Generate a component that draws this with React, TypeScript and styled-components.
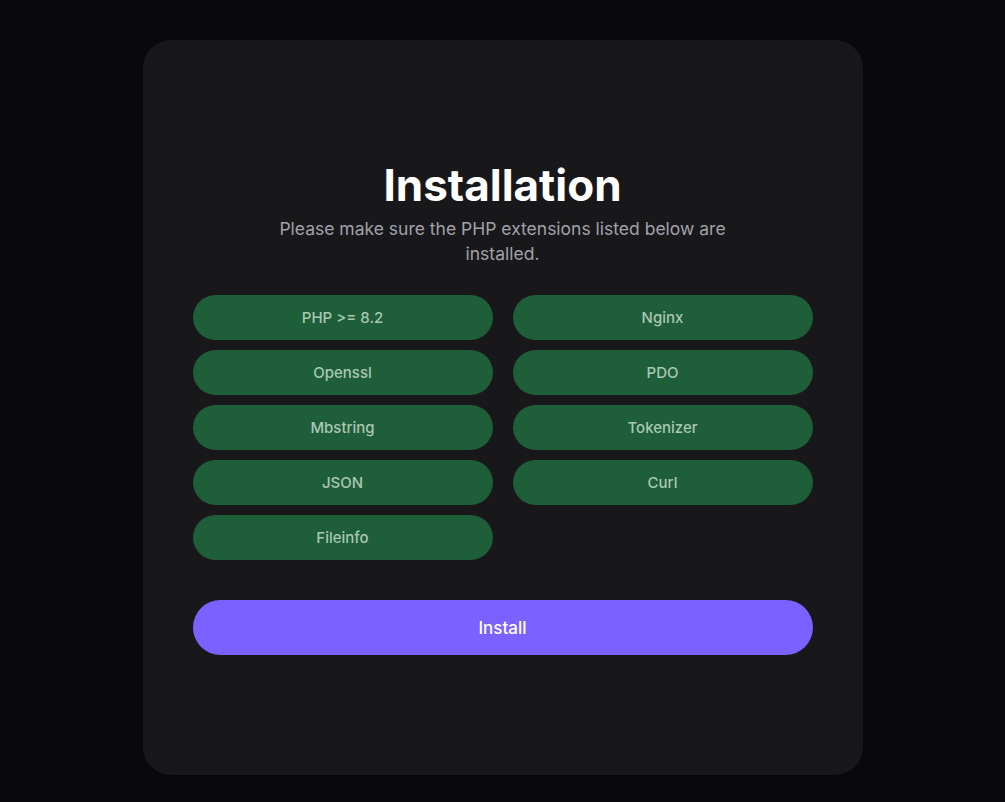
import styled, { createGlobalStyle } from "styled-components";

const GlobalStyle = createGlobalStyle`
  html, body {
    margin: 0;
    padding: 0;
    background: #09090b;
    font-family: Inter, "Noto Sans", sans-serif;
  }
`;

const extensions = [
  "PHP >= 8.2",
  "Nginx",
  "Openssl",
  "PDO",
  "Mbstring",
  "Tokenizer",
  "JSON",
  "Curl",
  "Fileinfo",
];

const Page = styled.div`
  min-height: 802px;
  display: flex;
  justify-content: center;
  padding-top: 40px;
  box-sizing: border-box;
`;

const Card = styled.div`
  width: 720px;
  height: 735px;
  box-sizing: border-box;
  background: #18181b;
  border-radius: 28px;
  padding: 0 50px;
  display: flex;
  flex-direction: column;
  justify-content: center;
`;

const Header = styled.div`
  display: flex;
  flex-direction: column;
  align-items: center;
  text-align: center;
  margin-bottom: 29px;
`;

const Title = styled.h1`
  margin: 0;
  color: #ffffff;
  font-size: 44px;
  font-weight: 700;
  line-height: 50px;
`;

const Subtitle = styled.p`
  margin: 6px 0 0;
  max-width: 460px;
  color: #a1a1aa;
  font-size: 17.5px;
  line-height: 25px;
`;

const Grid = styled.div`
  display: grid;
  grid-template-columns: 1fr 1fr;
  column-gap: 20px;
  row-gap: 10px;
  margin-bottom: 40px;
`;

const Extension = styled.div`
  height: 45px;
  border-radius: 999px;
  background: #1e5e38;
  color: #a9c7b3;
  font-size: 15px;
  font-weight: 500;
  display: flex;
  align-items: center;
  justify-content: center;
`;

const InstallButton = styled.button`
  height: 55px;
  border: none;
  border-radius: 999px;
  background: #7b61ff;
  color: #ffffff;
  font-family: inherit;
  font-size: 17px;
  font-weight: 500;
  cursor: pointer;
`;

const App = () => {
  return (
    <>
      <GlobalStyle />
      <Page>
        <Card>
          <Header>
            <Title>Installation</Title>
            <Subtitle>
              Please make sure the PHP extensions listed below are installed.
            </Subtitle>
          </Header>
          <Grid>
            {extensions.map((name) => (
              <Extension key={name}>{name}</Extension>
            ))}
          </Grid>
          <InstallButton type="button">Install</InstallButton>
        </Card>
      </Page>
    </>
  );
};

export default App;
